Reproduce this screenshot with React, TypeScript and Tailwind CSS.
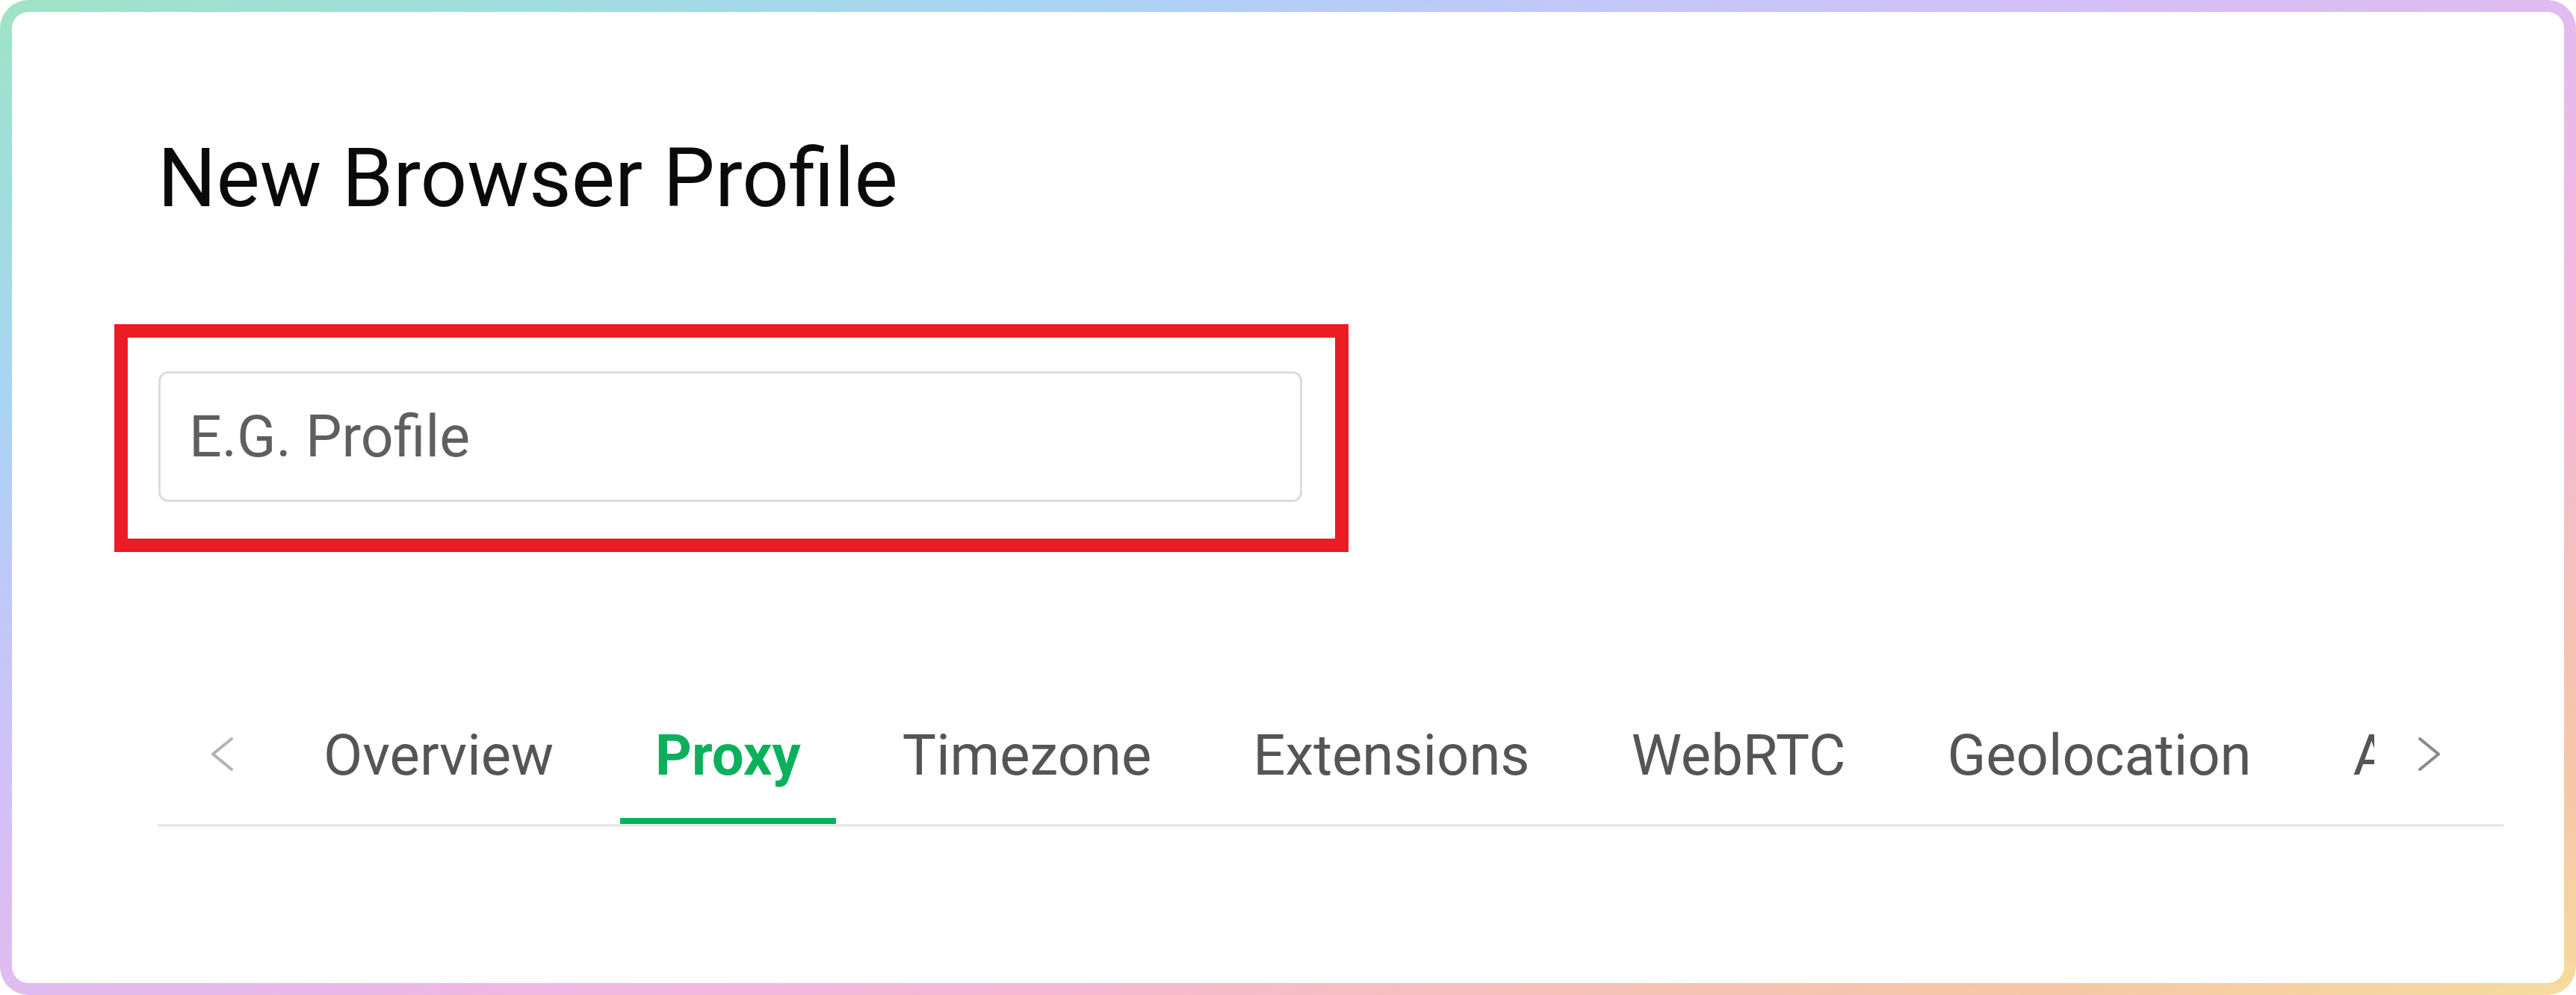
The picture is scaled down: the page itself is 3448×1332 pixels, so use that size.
import { useState } from "react";

const tabs = ["Overview", "Proxy", "Timezone", "Extensions", "WebRTC", "Geolocation", "Advanced"];

const Chevron = ({ dir, color }: { dir: "left" | "right"; color: string }) => (
  <svg width="33" height="47" viewBox="0 0 33 47" fill="none">
    <polyline
      points={dir === "left" ? "29,3 4,23.5 29,44" : "4,3 29,23.5 4,44"}
      stroke={color}
      strokeWidth="4"
      strokeLinecap="round"
      strokeLinejoin="round"
    />
  </svg>
);

const App = () => {
  const [active, setActive] = useState("Proxy");
  const [name, setName] = useState("");

  return (
    <div className="w-[3448px] h-[1332px] bg-white font-['Roboto',sans-serif]">
      <div className="w-full h-full rounded-[38px] p-[16px] bg-[linear-gradient(to_bottom_right,#9fe4c6_0%,#a0dcdc_10%,#a8d4f4_20%,#c0c8fa_30%,#d2c0f8_40%,#e0bcf0_50%,#f0b8e4_60%,#f6b8d4_70%,#f6c0b8_80%,#f6c8a6_90%,#f5dc9c_100%)]">
        <div className="w-full h-full rounded-[22px] bg-white pl-[195px] pr-[81px] pt-[158px]">
          <h1 className="text-[110px] leading-[129px] font-normal text-[#0a0a0a]">New Browser Profile</h1>

          <div className="mt-[131px] -ml-[58px] w-[1652px] border-[18px] border-[#ec1c24] pl-[41px] pr-[44px] pt-[45px] pb-[49px]">
            <input
              value={name}
              onChange={(e) => setName(e.target.value)}
              placeholder="E.G. Profile"
              className="w-[1531px] h-[175px] rounded-[13px] border-[3px] border-[#dcdcdc] pl-[38px] text-[77px] text-[#333] placeholder:text-[#5f5f5f] outline-none"
            />
          </div>

          <div className="mt-[228px] flex border-b-[4px] border-[#e9e9e9]">
            <button className="w-[175px] shrink-0 flex items-start pt-[19px] pl-[70px]">
              <Chevron dir="left" color="#b3b3b3" />
            </button>
            <div className="flex-1 overflow-hidden">
              <div className="flex gap-[42px]">
                {tabs.map((t) => (
                  <button
                    key={t}
                    onClick={() => setActive(t)}
                    className={
                      "relative shrink-0 px-[47px] pb-[47px] text-[76px] leading-[89px] whitespace-nowrap " +
                      (active === t ? "font-bold text-[#0cb05c]" : "font-normal text-[#555555]")
                    }
                  >
                    {t}
                    {active === t && (
                      <span className="absolute left-0 right-0 -bottom-[3px] h-[11px] bg-[#00b25c]" />
                    )}
                  </button>
                ))}
              </div>
            </div>
            <button className="w-[173px] shrink-0 flex items-start pt-[19px] pl-[57px]">
              <Chevron dir="right" color="#8a8a8a" />
            </button>
          </div>
        </div>
      </div>
    </div>
  );
};

export default App;
